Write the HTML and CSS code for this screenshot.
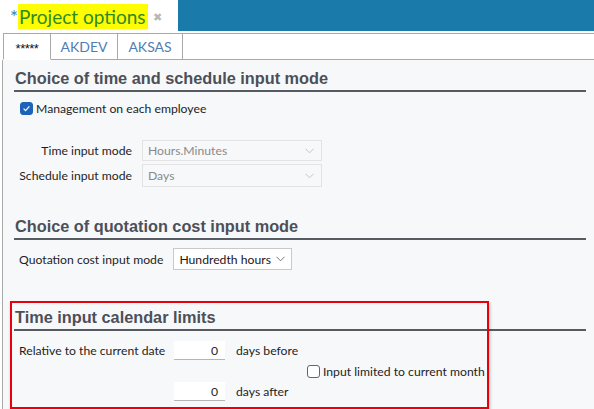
FILE: index.html
```html
<!DOCTYPE html>
<html>
<head>
<meta charset="utf-8">
<link rel="stylesheet" href="styles.css">
</head>
<body>
<div class="header">
  <div class="title-area">
    <span class="star">*</span><span class="title">Project options</span>
    <span class="close">&#x2716;</span>
  </div>
  <div class="bluebar"></div>
</div>
<div class="tabbar">
  <div class="tab active t1">*****</div>
  <div class="tab t2">AKDEV</div>
  <div class="tab t3">AKSAS</div>
  <div class="tabfill"></div>
</div>
<div class="content">
  <div class="section s1">
    <h2 class="heading">Choice of time and schedule input mode</h2>
    <label class="check-row">
      <span class="cb checked"><svg width="11" height="11" viewBox="0 0 11 11"><path d="M2.6 5.6 L4.6 7.6 L8.4 3.4" fill="none" stroke="#fff" stroke-width="1.2"/></svg></span>
      <span>Management on each employee</span>
    </label>
    <div class="form-grid">
      <span class="lbl">Time input mode</span>
      <div class="select disabled"><span>Hours.Minutes</span><svg class="chev" width="9" height="6" viewBox="0 0 9 6"><path d="M0.5 0.8 L4.5 4.8 L8.5 0.8" fill="none" stroke="#c4c4c4" stroke-width="1"/></svg></div>
      <span class="lbl">Schedule input mode</span>
      <div class="select disabled tall"><span>Days</span><svg class="chev" width="9" height="6" viewBox="0 0 9 6"><path d="M0.5 0.8 L4.5 4.8 L8.5 0.8" fill="none" stroke="#c4c4c4" stroke-width="1"/></svg></div>
    </div>
  </div>
  <div class="section s2">
    <h2 class="heading">Choice of quotation cost input mode</h2>
    <div class="row q-row">
      <span class="lbl">Quotation cost input mode</span>
      <div class="select active-sel"><span>Hundredth hours</span><svg class="chev" width="9" height="6" viewBox="0 0 9 6"><path d="M0.5 0.8 L4.5 4.8 L8.5 0.8" fill="none" stroke="#777" stroke-width="1"/></svg></div>
    </div>
  </div>
  <div class="section s3">
    <h2 class="heading">Time input calendar limits</h2>
    <div class="limits">
      <div class="row">
        <span class="lbl rel">Relative to the current date</span>
        <div class="num">0</div>
        <span class="unit">days before</span>
      </div>
      <label class="check-row month">
        <span class="cb"></span>
        <span>Input limited to current month</span>
      </label>
      <div class="row after">
        <div class="num">0</div>
        <span class="unit">days after</span>
      </div>
    </div>
    <div class="redbox"></div>
  </div>
</div>
</body>
</html>
```
FILE: styles.css
```css
html, body {
  margin: 0;
  padding: 0;
  width: 594px;
  height: 409px;
  overflow: hidden;
  background: #fff;
  font-family: Lato, "Noto Sans", sans-serif;
  font-size: 12.2px;
  color: #1e1e1e;
}

.header {
  display: flex;
  height: 31px;
}
.title-area {
  width: 178px;
  display: flex;
  align-items: center;
  padding-left: 10px;
  box-sizing: border-box;
  background: #fff;
  white-space: nowrap;
}
.star {
  color: #4a7fb5;
  font-size: 19px;
  line-height: 25px;
  margin-top: 2px;
}
.title {
  background: #fefe00;
  color: #2e8b22;
  font-size: 19px;
  line-height: 25px;
  padding: 0 2px 0 1px;
  margin-top: 2px;
}
.close {
  color: #b8b8b8;
  font-size: 11px;
  margin-left: 5px;
  margin-top: 3px;
}
.bluebar {
  flex: 1;
  background: #1a7aaa;
}

.tabbar {
  display: flex;
  margin-top: 2px;
  height: 27px;
  padding-left: 3px;
}
.tab {
  border: 1px solid #a9a9a9;
  border-left: none;
  box-sizing: border-box;
  display: flex;
  align-items: center;
  justify-content: center;
  color: #4f7db3;
  font-size: 14px;
  background: #fff;
}
.t1 { width: 48px; border-left: 1px solid #a9a9a9; }
.t2 { width: 67px; }
.t3 { width: 65px; }
.tab.active {
  color: #111;
  border-bottom: 1px solid #fff;
  font-family: "Liberation Sans", Arial, sans-serif;
  font-size: 13px;
  letter-spacing: -0.5px;
  padding-top: 4px;
}
.tabfill {
  flex: 1;
  border-top: 1px solid #a9a9a9;
  border-bottom: 1px solid #a9a9a9;
}

.content {
  margin-left: 2px;
  border-left: 1px solid #a9a9a9;
  background: #f7f8fa;
  height: 360px;
  padding-top: 1px;
}
.section {
  position: relative;
}
.heading {
  margin: 0 8px 0 11px;
  padding-left: 1px;
  font-family: "Liberation Sans", Arial, sans-serif;
  font-weight: bold;
  font-size: 16.3px;
  line-height: 22px;
  color: #4b5059;
  border-bottom: 2px solid #565b62;
  padding-bottom: 1px;
  white-space: nowrap;
}
.s1 .heading { margin-top: 6px; }
.s2 .heading { margin-top: 28px; }
.s3 .heading { margin-top: 36px; }

.check-row {
  display: flex;
  align-items: center;
  gap: 3px;
  white-space: nowrap;
}
.s1 .check-row {
  margin: 8px 0 0 17px;
  height: 16px;
}
.cb {
  width: 11px;
  height: 11px;
  border: 1px solid #666;
  border-radius: 3px;
  background: #fff;
  display: flex;
  align-items: center;
  justify-content: center;
}
.cb.checked {
  background: #1d63b8;
  border-color: #1d63b8;
}

.form-grid {
  display: grid;
  grid-template-columns: 113px 180px;
  column-gap: 10px;
  row-gap: 3px;
  margin: 24px 0 0 16px;
  align-items: center;
}
.lbl {
  text-align: right;
  white-space: nowrap;
}
.select {
  height: 21px;
  border: 1px solid #c9c9c9;
  box-sizing: border-box;
  display: flex;
  align-items: center;
  justify-content: space-between;
  padding: 0 7px 0 5px;
  white-space: nowrap;
}
.select.disabled {
  border-color: #e3e3e3;
  color: #8a8a8a;
  background: #f7f8fa;
}
.select.tall { height: 23px; }
.select.active-sel {
  background: #fff;
  width: 119px;
  height: 22px;
  color: #1e1418;
  padding: 0 6px 0 5px;
}

.row {
  display: flex;
  align-items: center;
}
.q-row {
  margin: 8px 0 0 16px;
  gap: 10px;
}
.limits {
  margin: 9px 0 0 16px;
}
.limits .row { height: 20px; }
.rel {
  width: 155px;
  text-align: left;
}
.num {
  width: 51px;
  height: 19px;
  box-sizing: border-box;
  background: #fff;
  border-bottom: 1px solid #b5b5b5;
  text-align: right;
  padding-right: 7px;
  line-height: 19px;
}
.unit {
  margin-left: 11px;
}
.month {
  margin: 1px 0 0 288px;
  height: 20px;
}
.after {
  margin-top: 0;
  padding-left: 155px;
}

.redbox {
  position: absolute;
  left: 7px;
  top: -5px;
  width: 475px;
  height: 104px;
  border: 2px solid #e8000b;
  box-shadow: 1px 2px 3px rgba(0,0,0,0.25);
  pointer-events: none;
}
```
